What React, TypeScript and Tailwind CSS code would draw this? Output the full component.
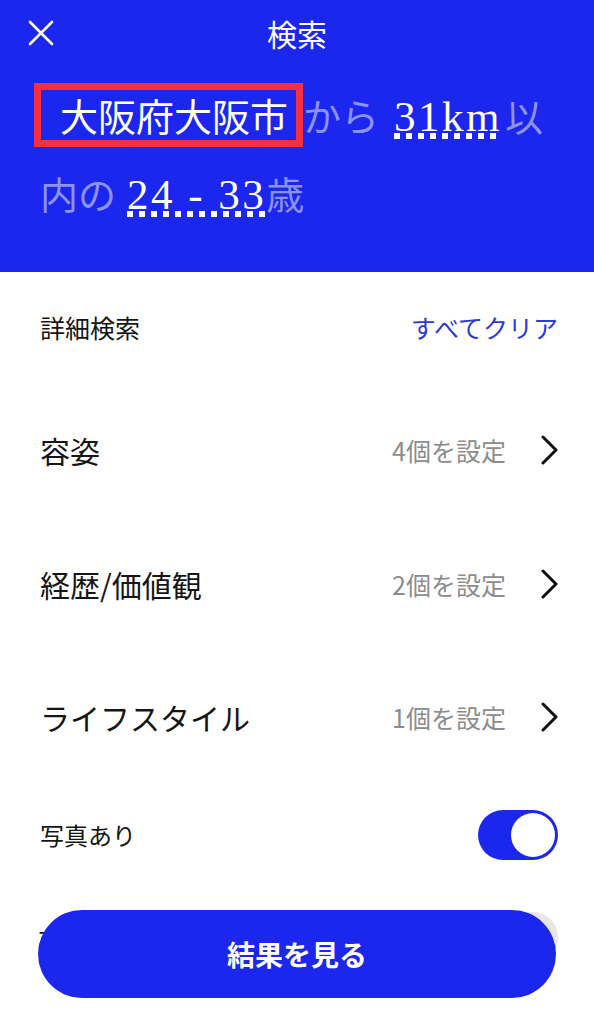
import React from "react";

const CJK = "font-['Noto_Sans_CJK_JP','Noto_Sans',sans-serif]";

function Chevron() {
  return (
    <svg width="18" height="32" viewBox="0 0 18 32" fill="none" className="shrink-0">
      <polyline points="3,3 16,16 3,29" stroke="#111" strokeWidth="3" strokeLinecap="round" strokeLinejoin="round" />
    </svg>
  );
}

function Serif({ children }: { children: React.ReactNode }) {
  return (
    <span className="inline-block font-['Liberation_Serif','Times_New_Roman',serif] text-[43px] leading-[43px] tracking-[2.5px] text-white pb-[1px] bg-[linear-gradient(90deg,#ffffff_6px,transparent_6px)] bg-[length:12px_6px] bg-repeat-x bg-[position:left_bottom]">
      {children}
    </span>
  );
}

function NavRow({ label, value, h }: { label: string; value: string; h: string }) {
  return (
    <div className={`flex items-center justify-between ${h}`}>
      <span className="text-[30px] text-[#151515] leading-none">{label}</span>
      <div className="flex items-center gap-[34px]">
        <span className="text-[25px] text-[#8c8c8c] leading-none">{value}</span>
        <Chevron />
      </div>
    </div>
  );
}

export default function App() {
  return (
    <div className={`relative w-[594px] h-[1024px] overflow-hidden bg-white ${CJK}`}>
      {/* Header */}
      <div className="h-[272px] bg-[#1b26ee] flex flex-col">
        <div className="relative h-[66px] flex items-center justify-center">
          <svg className="absolute left-[28px] top-[20px]" width="26" height="26" viewBox="0 0 26 26" fill="none">
            <path d="M2 2 L24 24 M24 2 L2 24" stroke="#fff" strokeWidth="2.6" strokeLinecap="round" />
          </svg>
          <span className="text-white text-[30px] leading-none">検索</span>
        </div>
        <div className="pl-[34px] pt-[17px] flex flex-col">
          <div className="flex items-baseline h-[85px]">
            <span className="inline-block border-[7px] border-[#f3303f] pl-[19px] pr-[8px] text-white text-[38px] leading-[50px]">
              大阪府大阪市
            </span>
            <span className="text-[38px] text-[#8c93f7] leading-[50px]">から</span>
            <span className="ml-[15px] mr-[3px]"><Serif>31km</Serif></span>
            <span className="text-[38px] text-[#8c93f7] leading-[50px]">以</span>
          </div>
          <div className="flex items-baseline pl-[6px] h-[70px]">
            <span className="text-[38px] text-[#8c93f7] leading-[50px]">内の</span>
            <span className="ml-[11px]"><Serif>24 - 33</Serif></span>
            <span className="text-[38px] text-[#8c93f7] leading-[50px]">歳</span>
          </div>
        </div>
      </div>

      {/* Body */}
      <div className="pl-[40px] pr-[36px] flex flex-col">
        <div className="flex items-center justify-between h-[110px]">
          <span className="text-[25px] text-[#151515] leading-none">詳細検索</span>
          <span className="text-[25px] text-[#2c3bd6] leading-none">すべてクリア</span>
        </div>
        <NavRow label="容姿" value="4個を設定" h="h-[136px]" />
        <NavRow label="経歴/価値観" value="2個を設定" h="h-[132px]" />
        <NavRow label="ライフスタイル" value="1個を設定" h="h-[134px]" />
        <div className="flex items-center justify-between h-[102px]">
          <span className="text-[24px] text-[#151515] leading-none">写真あり</span>
          <div className="w-[80px] h-[50px] rounded-full bg-[#1b26ee] p-[3px] flex justify-end">
            <div className="w-[44px] h-[44px] rounded-full bg-white" />
          </div>
        </div>
        <div className="flex items-center justify-between h-[102px]">
          <span className="text-[24px] text-[#151515] leading-none -ml-[2px]">本人確認済み</span>
          <div className="w-[80px] h-[50px] rounded-full bg-[#e6e6e6] p-[3px] flex justify-start">
            <div className="w-[44px] h-[44px] rounded-full bg-white shadow" />
          </div>
        </div>
      </div>

      {/* Bottom button */}
      <button className="absolute left-[38px] right-[38px] bottom-[26px] h-[88px] rounded-full bg-[#1b26ee] text-white text-[28px] font-bold flex items-center justify-center">
        結果を見る
      </button>
    </div>
  );
}
